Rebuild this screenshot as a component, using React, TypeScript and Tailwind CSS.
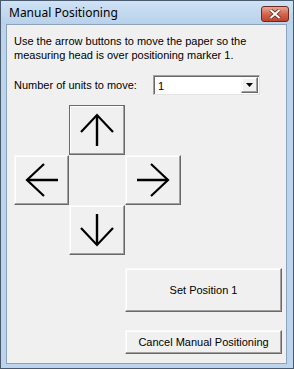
import React from 'react';

const Arrow: React.FC<{ dir: 'up' | 'down' | 'left' | 'right' }> = ({ dir }) => {
  const rot = { up: 0, right: 90, down: 180, left: 270 }[dir];
  return (
    <svg width="34" height="34" viewBox="0 0 34 34" style={{ transform: `rotate(${rot}deg)` }}>
      <line x1="17" y1="2" x2="17" y2="33" stroke="black" strokeWidth="2.4" />
      <polyline points="1,19 17,2 33,19" fill="none" stroke="black" strokeWidth="2.2" />
    </svg>
  );
};

const btn =
  'flex items-center justify-center bg-[#f0f0f0] border border-t-[#f8f8f8] border-l-[#f8f8f8] border-r-[#696969] border-b-[#696969] shadow-[inset_-1px_-1px_#a0a0a0,inset_1px_1px_#ffffff]';

export default function App() {
  return (
    <div
      className="w-[294px] h-[369px] bg-[#bcd4ec] border border-[#4a5a6e] flex flex-col text-black"
      style={{ fontFamily: '"Liberation Sans", Arial, sans-serif' }}
    >
      {/* title bar */}
      <div className="h-[23px] shrink-0 flex items-center justify-between pl-[8px] pr-[4px] bg-gradient-to-b from-[#cfe2f5] to-[#b8d1ea]">
        <span className="text-[12px] text-black" style={{ fontFamily: '"Noto Sans", sans-serif' }}>
          Manual Positioning
        </span>
        <div className="w-[28px] h-[16px] mt-[2px] rounded-[3px] border border-[#6b2a20] bg-gradient-to-b from-[#e8a596] via-[#d4664f] to-[#c3402a] flex items-center justify-center">
          <svg width="12" height="10" viewBox="0 0 12 10">
            <path d="M1.5,1 L10.5,9 M10.5,1 L1.5,9" stroke="#5a2a20" strokeWidth="3.6" />
            <path d="M1.5,1 L10.5,9 M10.5,1 L1.5,9" stroke="#ffffff" strokeWidth="2" />
          </svg>
        </div>
      </div>

      {/* client area */}
      <div className="flex-1 ml-[5px] mr-[6px] mb-[4px] bg-[#f0f0f0] border border-[#8ca3bd] flex flex-col pl-[7px] pt-[9px] text-[11px] leading-[14px]">
        <p className="whitespace-nowrap">
          Use the arrow buttons to move the paper so the
          <br />
          measuring head is over positioning marker 1.
        </p>

        <div className="flex items-center mt-[13px]">
          <span className="w-[139px] whitespace-nowrap">Number of units to move:</span>
          <div className="w-[107px] h-[20px] bg-white border border-t-[#a0a0a0] border-l-[#a0a0a0] border-r-[#e3e3e3] border-b-[#e3e3e3] shadow-[inset_1px_1px_#696969] flex items-center">
            <span className="flex-1 pl-[4px] pt-[1px]">1</span>
            <div className={btn + ' w-[17px] h-[16px] mr-[1px]'}>
              <svg width="7" height="4" viewBox="0 0 7 4">
                <path d="M0,0 L7,0 L3.5,4 Z" fill="black" />
              </svg>
            </div>
          </div>
        </div>

        <div className="grid grid-cols-[55px_56px_56px] grid-rows-[50px_50px_50px] mt-[10px]">
          <div />
          <div className="flex items-center justify-center bg-[#f0f0f0] border border-[#6a6a6a] shadow-[inset_-1px_-1px_#a0a0a0,inset_1px_1px_#ffffff]">
            <Arrow dir="up" />
          </div>
          <div />
          <div className={btn}>
            <Arrow dir="left" />
          </div>
          <div />
          <div className={btn}>
            <Arrow dir="right" />
          </div>
          <div />
          <div className={btn}>
            <Arrow dir="down" />
          </div>
          <div />
        </div>

        <div className={btn + ' w-[157px] h-[44px] ml-[111px] mt-[13px]'}>Set Position 1</div>
        <div className={btn + ' w-[157px] h-[24px] ml-[111px] mt-[18px]'}>Cancel Manual Positioning</div>
      </div>
    </div>
  );
}
